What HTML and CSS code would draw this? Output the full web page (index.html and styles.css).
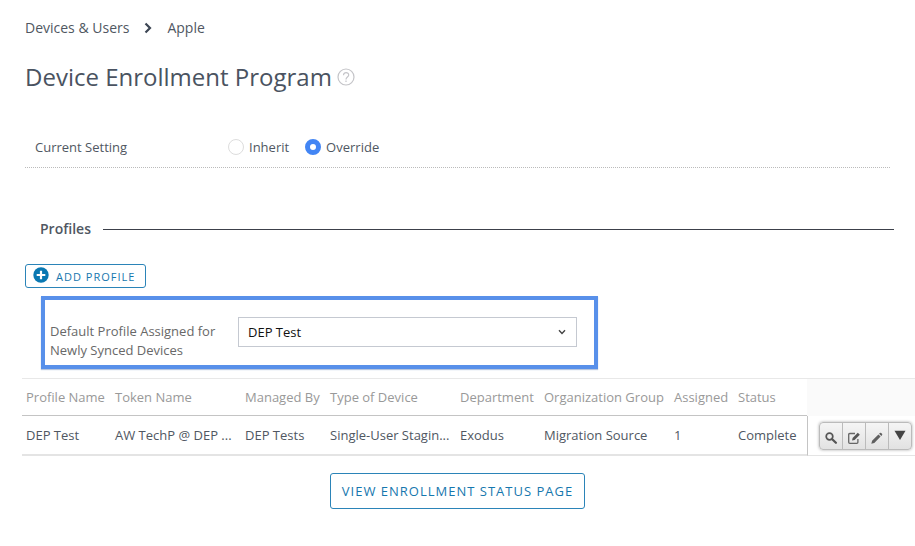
FILE: index.html
```html
<!DOCTYPE html>
<html lang="en">
<head>
<meta charset="utf-8">
<title>Device Enrollment Program</title>
<link rel="stylesheet" href="styles.css">
</head>
<body>
<main class="page">
  <nav class="breadcrumb" aria-label="Breadcrumb">
    <a href="#">Devices &amp; Users</a>
    <svg class="crumb-arrow" width="8" height="12" viewBox="0 0 8 12" aria-hidden="true"><path d="M1.5 1.5 6 6 1.5 10.5"/></svg>
    <a href="#">Apple</a>
  </nav>

  <header class="title">
    <h1>Device Enrollment Program</h1>
    <button class="help" type="button" aria-label="Help">
      <svg width="18" height="18" viewBox="0 0 18 18" aria-hidden="true"><circle cx="9" cy="9" r="8"/><path d="M6.5 7.2C6.5 3.6 11.8 3.8 11.7 7c0 2-2.7 2.1-2.7 4.4M9 12.6v1.3"/></svg>
    </button>
  </header>

  <fieldset class="setting">
    <legend class="setting-label">Current Setting</legend>
    <label class="choice"><input type="radio" name="setting">Inherit</label>
    <label class="choice"><input type="radio" name="setting" checked>Override</label>
  </fieldset>

  <section class="profiles">
    <h2>Profiles</h2>
    <button class="button add" type="button">
      <svg width="16" height="16" viewBox="0 0 16 16" aria-hidden="true"><circle cx="8" cy="8" r="7.7" fill="#0a78b2"/><path d="M8 3.7v8.6M3.7 8h8.6" stroke="#fff" stroke-width="2.2"/></svg>
      <span>ADD PROFILE</span>
    </button>
    <div class="default-profile">
      <label for="default">Default Profile Assigned for Newly Synced Devices</label>
      <div class="select">
        <select id="default"><option>DEP Test</option></select>
        <svg class="caret" width="8" height="6" viewBox="0 0 8 6" aria-hidden="true"><path d="M1 1.2 4 4.4 7 1.2"/></svg>
      </div>
    </div>
  </section>

  <table class="grid">
    <colgroup>
      <col class="c-profile"><col class="c-wide"><col class="c-managed"><col class="c-wide"><col class="c-department"><col class="c-wide"><col class="c-assigned"><col class="c-status"><col>
    </colgroup>
    <thead>
      <tr><th>Profile Name</th><th>Token Name</th><th>Managed By</th><th>Type of Device</th><th>Department</th><th>Organization Group</th><th>Assigned</th><th>Status</th><td class="actions-head"></td></tr>
    </thead>
    <tbody>
      <tr>
        <td>DEP Test</td><td>AW TechP @ DEP ...</td><td>DEP Tests</td><td>Single-User Stagin...</td><td>Exodus</td><td>Migration Source</td><td>1</td><td>Complete</td>
        <td class="actions">
          <div class="toolbar">
            <button type="button" aria-label="View"><svg width="14" height="14" viewBox="0 0 14 14" aria-hidden="true"><circle cx="5.5" cy="5.5" r="3.3" fill="none" stroke="#555" stroke-width="1.7"/><path d="m8.2 8.2 3.7 3.6" stroke="#555" stroke-width="2.3" stroke-linecap="round"/></svg></button>
            <button type="button" aria-label="Assign"><svg width="14" height="14" viewBox="0 0 14 14" aria-hidden="true"><path d="M8 2.5H2.8Q1.7 2.5 1.7 3.6v7.6q0 1.1 1.1 1.1h7q1.1 0 1.1-1.1V8" fill="none" stroke="#666" stroke-width="1.3"/><path d="m5 9.5.6-2.6 5.2-5.2 2 2-5.2 5.2Z" fill="#555"/></svg></button>
            <button type="button" aria-label="Edit"><svg width="14" height="14" viewBox="0 0 14 14" aria-hidden="true"><path d="m1.3 12.7.8-3 6.3-6.3 2.2 2.2-6.3 6.3ZM9.1 2.7l.7-.7q.7-.6 1.4 0l.8.8q.6.7 0 1.4l-.7.7Z" fill="#606060"/></svg></button>
            <button type="button" aria-label="More actions"><svg width="14" height="14" viewBox="0 0 14 14" aria-hidden="true"><path d="M1.5 .8h11L7 10Z" fill="#444"/></svg></button>
          </div>
        </td>
      </tr>
    </tbody>
  </table>

  <footer class="footer"><button class="button status" type="button">VIEW ENROLLMENT STATUS PAGE</button></footer>
</main>
</body>
</html>
```
FILE: styles.css
```css
* {
  box-sizing: border-box;
}

body {
  margin: 0;
  background: #fff;
  color: #505762;
  font: 13px/18px "Open Sans", sans-serif;
}

button,
select {
  font: inherit;
}

.page {
  padding: 18px 0 24px 22px;
}

.breadcrumb {
  display: flex;
  align-items: center;
  gap: 15px;
  padding-left: 3px;
  font-size: 14px;
  line-height: 20px;
}

.breadcrumb a {
  color: inherit;
  text-decoration: none;
}

.crumb-arrow path {
  fill: none;
  stroke: #3d4654;
  stroke-width: 2.2;
}

.title {
  display: flex;
  align-items: center;
  gap: 5px;
  margin-top: 21px;
  padding-left: 3px;
}

h1 {
  margin: 0;
  color: #4a5361;
  font-size: 24px;
  font-weight: 400;
  line-height: 36px;
}

.help {
  display: flex;
  padding: 0;
  border: 0;
  background: none;
}

.help svg {
  fill: none;
  stroke: #c4c4c8;
  stroke-width: 1.2;
}

.setting {
  display: flex;
  align-items: center;
  gap: 16px;
  margin: 43px 25px 0 3px;
  padding: 0 0 11px 10px;
  border: 0;
  border-bottom: 1px dotted #bbb;
}

.setting-label {
  float: left;
  width: 177px;
  padding: 0;
}

.choice {
  display: flex;
  align-items: center;
  gap: 5px;
}

.choice input {
  appearance: none;
  width: 16px;
  height: 16px;
  margin: 0;
  border: 1px solid #ddd;
  border-radius: 50%;
  background: #fff;
}

.choice input:checked {
  border: 5px solid #4285f4;
}

h2 {
  display: flex;
  align-items: center;
  gap: 12px;
  margin: 51px 21px 0 18px;
  font-size: 14px;
  font-weight: 600;
  line-height: 20px;
}

h2::after {
  flex: 1;
  border-top: 1px solid #3c404a;
  content: "";
}

.button {
  border: 1px solid #2b84b8;
  border-radius: 3px;
  background: #fff;
  color: #1677ae;
  letter-spacing: 1px;
}

.add {
  display: flex;
  align-items: flex-start;
  gap: 7px;
  height: 24px;
  margin: 25px 0 0 3px;
  padding: 2px 10px 0 7px;
  font-size: 11px;
}

.add span {
  padding-top: 1px;
}

.default-profile {
  display: flex;
  align-items: flex-start;
  gap: 18px;
  max-width: 557px;
  margin: 8px 0 0 19px;
  padding: 17px 17px 5px 5px;
  border: 4px solid #5890ea;
  box-shadow: 0 1px 1px #b8c6de;
}

.default-profile label {
  width: 170px;
  padding-top: 5px;
  color: #686868;
  line-height: 19px;
}

.select {
  display: grid;
  flex: 1;
  align-items: center;
}

.select select,
.caret {
  grid-area: 1 / 1;
}

.select select {
  width: 100%;
  height: 30px;
  padding: 0 9px;
  border: 1px solid #c5c9d1;
  border-radius: 0;
  appearance: none;
  background: #fff;
  color: #111;
}

.caret {
  justify-self: end;
  margin-right: 11px;
  pointer-events: none;
}

.caret path {
  fill: none;
  stroke: #444;
  stroke-width: 1.4;
}

.grid {
  width: 100%;
  margin-top: 9px;
  border-collapse: separate;
  border-spacing: 0;
  table-layout: fixed;
}

.c-profile { width: 89px; }
.c-wide { width: 130px; }
.c-managed { width: 85px; }
.c-department { width: 84px; }
.c-assigned { width: 64px; }
.c-status { width: 73px; }

.grid th,
.grid td {
  padding: 0 4px;
  font-weight: 400;
  text-align: left;
  white-space: nowrap;
}

.grid th {
  height: 38px;
  border-top: 1px solid #e8e8e8;
  border-bottom: 1px solid #c4c4c4;
  color: #999;
}

.grid td {
  height: 40px;
  border-bottom: 2px solid #e4e4e4;
}

.grid .actions-head {
  height: 38px;
  border-top: 1px solid #e8e8e8;
  border-bottom: 0;
  background: #fafafa;
}

.grid .actions {
  padding: 1px 3px 0 11px;
  border-bottom-width: 1px;
  border-left: 1px solid #c4c4c4;
}

.toolbar {
  display: flex;
  height: 28px;
  border: 1px solid #bbb;
  border-radius: 4px;
  box-shadow: 0 0 3px #aaa;
  background: linear-gradient(#f5f5f5, #e2e2e2);
}

.toolbar button {
  display: flex;
  flex: 1;
  align-items: center;
  justify-content: center;
  padding: 4px 0 0;
  border: 0;
  border-left: 1px solid #bbb;
  background: none;
}

.toolbar button:first-child {
  border-left: 0;
}

.toolbar button:last-child {
  padding-top: 2px;
}

.footer {
  display: flex;
  justify-content: center;
  margin-top: 17px;
  padding-right: 22px;
}

.status {
  height: 36px;
  padding: 0 11px;
  font-weight: 500;
}
```
